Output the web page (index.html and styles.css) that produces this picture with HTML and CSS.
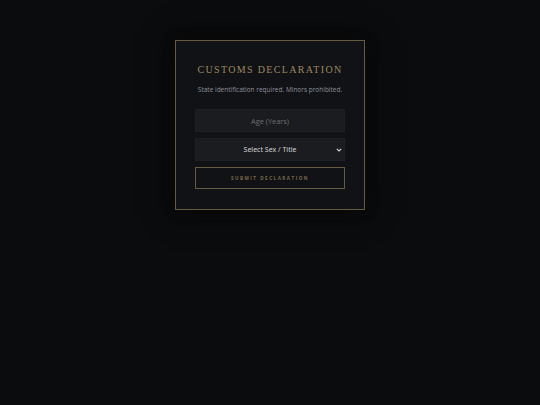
FILE: index.html
```html
<!DOCTYPE html>
<html lang="en">
<head>
<meta charset="utf-8">
<title>Customs Declaration</title>
<link rel="stylesheet" href="styles.css">
</head>
<body>
<main class="page">
  <form class="card">
    <h1 class="title">Customs Declaration</h1>
    <p class="subtitle">State identification required. Minors prohibited.</p>
    <input class="field" type="number" placeholder="Age (Years)">
    <div class="select-wrap">
      <select class="field select">
        <option>Select Sex / Title</option>
      </select>
      <svg class="chevron" width="6" height="4" viewBox="0 0 6 4" aria-hidden="true">
        <path d="M0.8 0.8 L3 3 L5.2 0.8" fill="none" stroke="#d4d4d6" stroke-width="1.1"/>
      </svg>
    </div>
    <button class="submit" type="button">Submit Declaration</button>
  </form>
</main>
</body>
</html>
```
FILE: styles.css
```css
html, body {
  margin: 0;
  padding: 0;
  background: #0b0c0e;
  color-scheme: dark;
}
body {
  min-height: 405px;
  font-family: "Open Sans", "DejaVu Sans", sans-serif;
}
.page {
  display: flex;
  justify-content: center;
  padding-top: 40px;
}
.card {
  box-sizing: border-box;
  width: 190px;
  height: 170px;
  margin: 0;
  padding: 22px 19px 20px;
  background: #111215;
  border: 1px solid #675b3f;
  box-shadow: 0 0 24px 6px rgba(0, 0, 0, 0.55), 0 0 18px rgba(150, 120, 60, 0.06);
  display: flex;
  flex-direction: column;
  align-items: stretch;
}
.card > * {
  flex-shrink: 0;
}
.title {
  margin: 0;
  font-family: "Liberation Serif", serif;
  font-weight: normal;
  font-size: 10px;
  line-height: 14px;
  letter-spacing: 1.35px;
  white-space: nowrap;
  text-transform: uppercase;
  color: #9c8862;
  text-align: center;
}
.subtitle {
  margin: 9px 0 0;
  font-size: 6.5px;
  line-height: 8px;
  white-space: nowrap;
  color: #8d919c;
  text-align: center;
}
.field {
  box-sizing: border-box;
  width: 100%;
  height: 23px;
  margin: 0;
  border: 1px solid #1f2024;
  border-radius: 0;
  background: #1b1c20;
  color: #d4d4d6;
  font-family: "Open Sans", sans-serif;
  font-size: 7.4px;
  text-align: center;
  outline: none;
  padding: 0 4px;
}
input.field {
  margin-top: 15px;
  -moz-appearance: textfield;
}
input.field::-webkit-outer-spin-button,
input.field::-webkit-inner-spin-button {
  -webkit-appearance: none;
  margin: 0;
}
.field::placeholder {
  color: #6c6d70;
}
.select-wrap {
  position: relative;
  margin-top: 6px;
}
.select {
  display: block;
  -webkit-appearance: none;
  appearance: none;
  text-align-last: center;
  font-family: "Noto Sans", sans-serif;
  font-size: 7px;
  color: #d2d2d4;
}
.chevron {
  position: absolute;
  right: 3px;
  top: 10px;
  pointer-events: none;
}
.submit {
  box-sizing: border-box;
  width: 100%;
  height: 22px;
  margin-top: 6px;
  background: transparent;
  border: 1px solid #665a40;
  color: #7b6a49;
  font-family: "Open Sans", sans-serif;
  font-weight: 700;
  font-size: 4.6px;
  letter-spacing: 1.5px;
  text-transform: uppercase;
  cursor: pointer;
}
```
